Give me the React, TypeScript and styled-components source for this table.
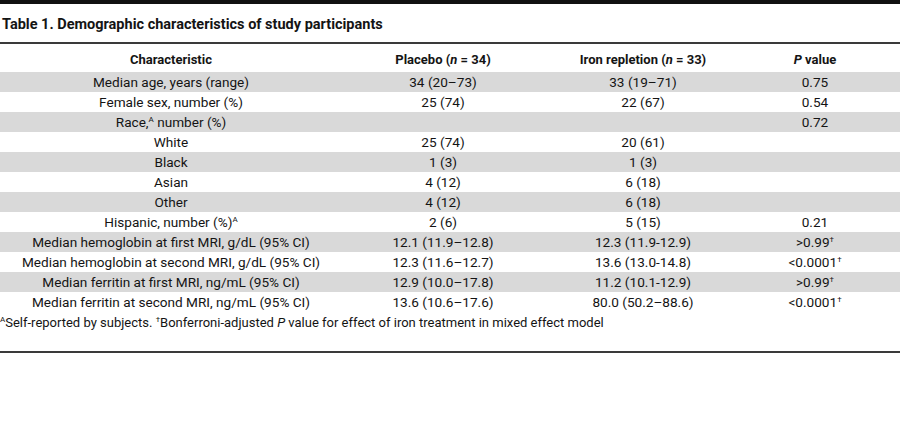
import React from 'react'
import styled, { createGlobalStyle } from 'styled-components'

const GlobalStyle = createGlobalStyle`
  html, body {
    margin: 0;
    padding: 0;
    background: #fff;
  }
  body {
    font-family: Roboto, "Liberation Sans", sans-serif;
    color: #141414;
  }
`

const Page = styled.div`
  width: 900px;
  display: flex;
  flex-direction: column;
`

const TopBar = styled.div`
  height: 4px;
  background: #111;
`

const Title = styled.h1`
  margin: 12px 0 9px 2px;
  font-size: 14.5px;
  line-height: 17px;
  font-weight: 700;
  color: #141414;
`

const Rule = styled.div`
  height: 2px;
  background: #3a3a3a;
`

const Table = styled.table`
  width: 900px;
  border-collapse: collapse;
  table-layout: fixed;
  font-size: 13.6px;
`

const HeadCell = styled.th`
  height: 24px;
  padding: 4px 0 0;
  font-size: 13px;
  font-weight: 700;
  text-align: center;
  line-height: 20px;
`

const Row = styled.tr<{ $shaded: boolean }>`
  background: ${p => (p.$shaded ? '#d9d9d9' : '#fff')};
`

const Cell = styled.td`
  height: 20px;
  padding: 0;
  text-align: center;
  line-height: 20px;
  white-space: nowrap;
`

const Sup = styled.sup`
  font-size: 8px;
  line-height: 0;
  vertical-align: 5px;
`

const Footnote = styled.p`
  margin: 2px 0 19px 0;
  font-size: 13px;
  line-height: 18px;
`

const rows: [React.ReactNode, string, string, React.ReactNode][] = [
  ['Median age, years (range)', '34 (20–73)', '33 (19–71)', '0.75'],
  ['Female sex, number (%)', '25 (74)', '22 (67)', '0.54'],
  [<>Race,<Sup>A</Sup> number (%)</>, '', '', '0.72'],
  ['White', '25 (74)', '20 (61)', ''],
  ['Black', '1 (3)', '1 (3)', ''],
  ['Asian', '4 (12)', '6 (18)', ''],
  ['Other', '4 (12)', '6 (18)', ''],
  [<>Hispanic, number (%)<Sup>A</Sup></>, '2 (6)', '5 (15)', '0.21'],
  ['Median hemoglobin at first MRI, g/dL (95% CI)', '12.1 (11.9–12.8)', '12.3 (11.9-12.9)', <>&gt;0.99<Sup>†</Sup></>],
  ['Median hemoglobin at second MRI, g/dL (95% CI)', '12.3 (11.6–12.7)', '13.6 (13.0-14.8)', <>&lt;0.0001<Sup>†</Sup></>],
  ['Median ferritin at first MRI, ng/mL (95% CI)', '12.9 (10.0–17.8)', '11.2 (10.1-12.9)', <>&gt;0.99<Sup>†</Sup></>],
  ['Median ferritin at second MRI, ng/mL (95% CI)', '13.6 (10.6–17.6)', '80.0 (50.2–88.6)', <>&lt;0.0001<Sup>†</Sup></>]
]

const App: React.FC = () => {
  return (
    <Page>
      <GlobalStyle />
      <TopBar />
      <Title>Table 1. Demographic characteristics of study participants</Title>
      <Rule />
      <Table>
        <colgroup>
          <col style={{ width: 342 }} />
          <col style={{ width: 202 }} />
          <col style={{ width: 198 }} />
          <col style={{ width: 146 }} />
          <col style={{ width: 12 }} />
        </colgroup>
        <thead>
          <tr>
            <HeadCell>Characteristic</HeadCell>
            <HeadCell>Placebo (<i>n</i> = 34)</HeadCell>
            <HeadCell>Iron repletion (<i>n</i> = 33)</HeadCell>
            <HeadCell><i>P</i> value</HeadCell>
            <HeadCell />
          </tr>
        </thead>
        <tbody>
          {rows.map((r, i) => (
            <Row key={i} $shaded={i % 2 === 0}>
              <Cell>{r[0]}</Cell>
              <Cell>{r[1]}</Cell>
              <Cell>{r[2]}</Cell>
              <Cell>{r[3]}</Cell>
              <Cell />
            </Row>
          ))}
        </tbody>
      </Table>
      <Footnote>
        <Sup>A</Sup>Self-reported by subjects. <Sup>†</Sup>Bonferroni-adjusted <i>P</i> value for effect of iron treatment in mixed effect model
      </Footnote>
      <Rule />
    </Page>
  )
}

export default App
